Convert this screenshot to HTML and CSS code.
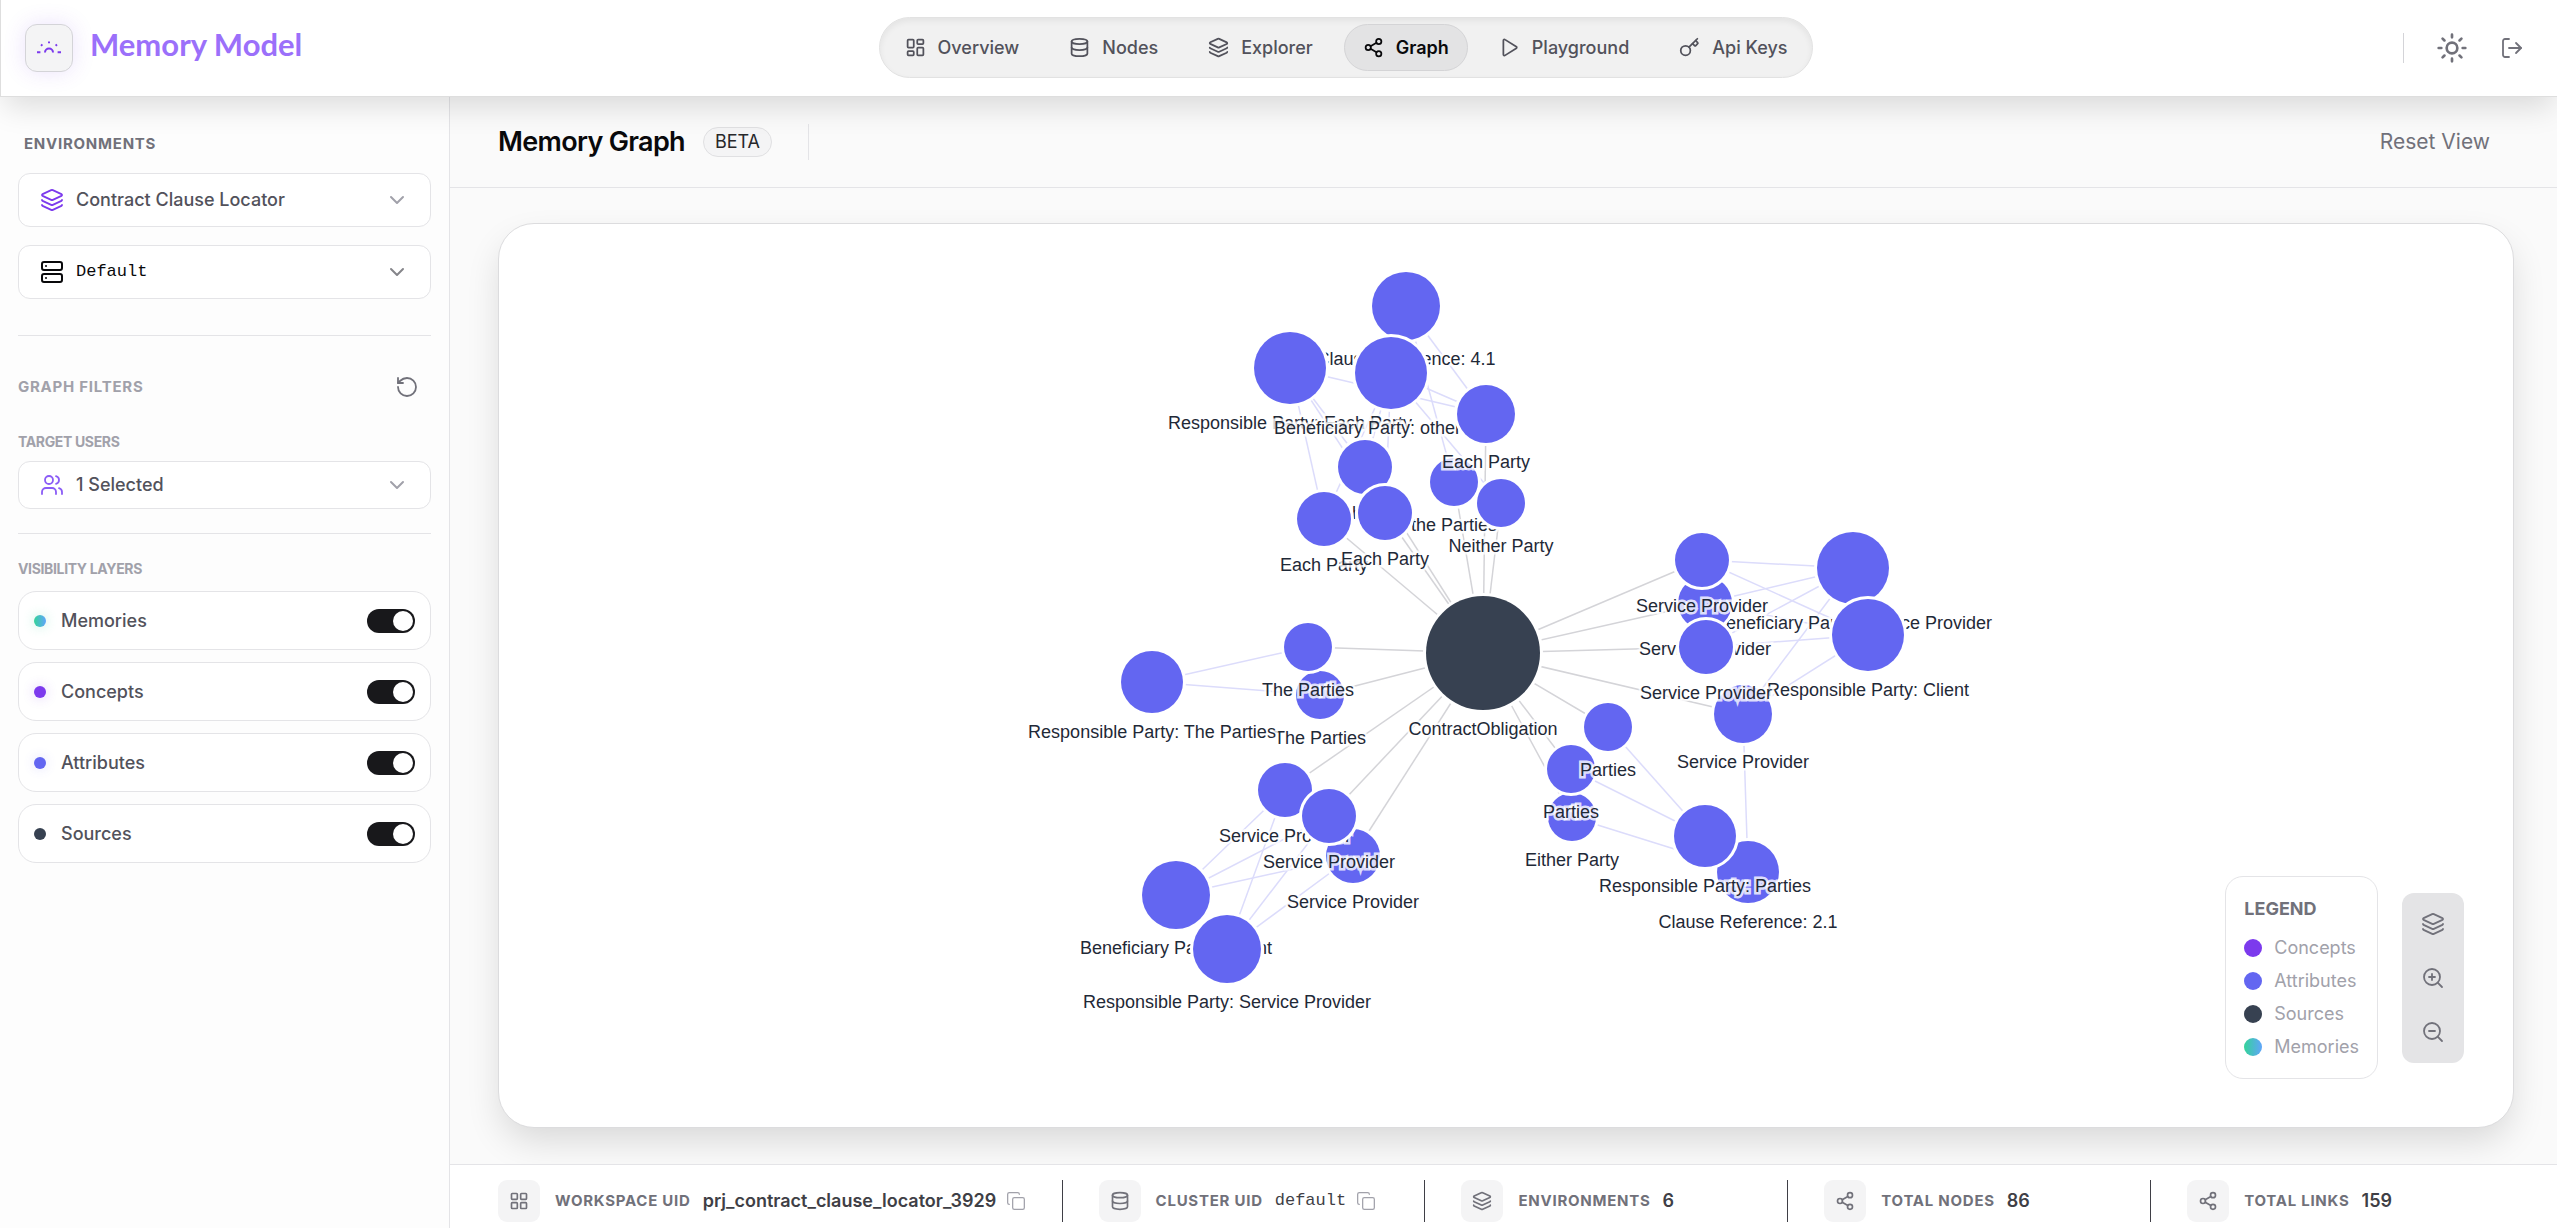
FILE: index.html
```html
<!DOCTYPE html>
<html lang="en">
<head>
    <meta charset="UTF-8">
    <meta name="viewport" content="width=device-width, initial-scale=1.0">
    <title>Memory Model - Memory Graph</title>
    <link rel="stylesheet" href="styles.css">
</head>
<body>
    <!-- Shared icons -->
    <svg class="sprite" aria-hidden="true">
        <symbol id="i-dashboard" viewBox="0 0 24 24"><rect x="3" y="3" width="7" height="9" rx="1"/><rect x="14" y="3" width="7" height="5" rx="1"/><rect x="14" y="12" width="7" height="9" rx="1"/><rect x="3" y="16" width="7" height="5" rx="1"/></symbol>
        <symbol id="i-grid" viewBox="0 0 24 24"><rect x="3" y="3" width="7" height="7" rx="1"/><rect x="14" y="3" width="7" height="7" rx="1"/><rect x="14" y="14" width="7" height="7" rx="1"/><rect x="3" y="14" width="7" height="7" rx="1"/></symbol>
        <symbol id="i-database" viewBox="0 0 24 24"><ellipse cx="12" cy="5" rx="9" ry="3"/><path d="M3 5V19A9 3 0 0 0 21 19V5"/><path d="M3 12A9 3 0 0 0 21 12"/></symbol>
        <symbol id="i-layers" viewBox="0 0 24 24"><path d="M12.83 2.18a2 2 0 0 0-1.66 0L2.6 6.08a1 1 0 0 0 0 1.83l8.58 3.91a2 2 0 0 0 1.66 0l8.58-3.9a1 1 0 0 0 0-1.83z"/><path d="M2 12a1 1 0 0 0 .58.91l8.6 3.91a2 2 0 0 0 1.65 0l8.58-3.9A1 1 0 0 0 22 12"/><path d="M2 17a1 1 0 0 0 .58.91l8.6 3.91a2 2 0 0 0 1.65 0l8.58-3.9A1 1 0 0 0 22 17"/></symbol>
        <symbol id="i-share" viewBox="0 0 24 24"><circle cx="18" cy="5" r="3"/><circle cx="6" cy="12" r="3"/><circle cx="18" cy="19" r="3"/><path d="M8.59 13.51l6.83 3.98M15.41 6.51l-6.82 3.98"/></symbol>
        <symbol id="i-play" viewBox="0 0 24 24"><path d="M5 4a1.2 1.2 0 0 1 1.9-1l13 8.2a1 1 0 0 1 0 1.6l-13 8.2A1.2 1.2 0 0 1 5 20z"/></symbol>
        <symbol id="i-key" viewBox="0 0 24 24"><path d="m15.5 7.5 2.3 2.3a1 1 0 0 0 1.4 0l2.1-2.1a1 1 0 0 0 0-1.4L19 4"/><path d="m21 2-9.6 9.6"/><circle cx="7.5" cy="15.5" r="5.5"/></symbol>
        <symbol id="i-sun" viewBox="0 0 24 24"><circle cx="12" cy="12" r="4"/><path d="M12 2v2M12 20v2M4.93 4.93l1.41 1.41M17.66 17.66l1.41 1.41M2 12h2M20 12h2M6.34 17.66l-1.41 1.41M19.07 4.93l-1.41 1.41"/></symbol>
        <symbol id="i-logout" viewBox="0 0 24 24"><path d="M9 21H5a2 2 0 0 1-2-2V5a2 2 0 0 1 2-2h4"/><path d="m16 17 5-5-5-5"/><path d="M21 12H9"/></symbol>
        <symbol id="i-server" viewBox="0 0 24 24"><rect x="2" y="2" width="20" height="8" rx="2"/><rect x="2" y="14" width="20" height="8" rx="2"/><path d="M6 6h.01M6 18h.01"/></symbol>
        <symbol id="i-users" viewBox="0 0 24 24"><path d="M16 21v-2a4 4 0 0 0-4-4H6a4 4 0 0 0-4 4v2"/><circle cx="9" cy="7" r="4"/><path d="M22 21v-2a4 4 0 0 0-3-3.87"/><path d="M16 3.13a4 4 0 0 1 0 7.75"/></symbol>
        <symbol id="i-chevron" viewBox="0 0 24 24"><path d="m6 9 6 6 6-6"/></symbol>
        <symbol id="i-rotate" viewBox="0 0 24 24"><path d="M3 12a9 9 0 1 0 9-9 9.75 9.75 0 0 0-6.74 2.74L3 8"/><path d="M3 3v5h5"/></symbol>
        <symbol id="i-copy" viewBox="0 0 24 24"><rect x="8" y="8" width="14" height="14" rx="2"/><path d="M4 16c-1.1 0-2-.9-2-2V4c0-1.1.9-2 2-2h10c1.1 0 2 .9 2 2"/></symbol>
        <symbol id="i-zoom-in" viewBox="0 0 24 24"><circle cx="11" cy="11" r="8"/><path d="m21 21-4.35-4.35M11 8v6M8 11h6"/></symbol>
        <symbol id="i-zoom-out" viewBox="0 0 24 24"><circle cx="11" cy="11" r="8"/><path d="m21 21-4.35-4.35M8 11h6"/></symbol>
    </svg>

    <header class="topbar">
        <a href="#" class="brand">
            <span class="brand-logo">
                <svg viewBox="0 0 26 26" aria-hidden="true">
                    <path d="M1 17.2h3.4M21.6 17.2H25M9 17.6a4 4 0 0 1 8 0"/>
                    <path d="M5 9.6l1.4 1.2M21 9.6l-1.4 1.2M13 6.4v1.8"/>
                </svg>
            </span>
            <span class="brand-name">Memory Model</span>
        </a>

        <nav class="nav">
            <a href="#" class="nav-item"><svg class="icon"><use href="#i-dashboard"/></svg>Overview</a>
            <a href="#" class="nav-item"><svg class="icon"><use href="#i-database"/></svg>Nodes</a>
            <a href="#" class="nav-item"><svg class="icon"><use href="#i-layers"/></svg>Explorer</a>
            <a href="#" class="nav-item active"><svg class="icon"><use href="#i-share"/></svg>Graph</a>
            <a href="#" class="nav-item"><svg class="icon"><use href="#i-play"/></svg>Playground</a>
            <a href="#" class="nav-item"><svg class="icon"><use href="#i-key"/></svg>Api Keys</a>
        </nav>

        <div class="topbar-actions">
            <span class="divider"></span>
            <button type="button" class="icon-btn" aria-label="Toggle theme"><svg class="icon icon-lg"><use href="#i-sun"/></svg></button>
            <button type="button" class="icon-btn" aria-label="Log out"><svg class="icon icon-md"><use href="#i-logout"/></svg></button>
        </div>
    </header>

    <div class="layout">
        <aside class="sidebar">
            <h2 class="side-title">Environments</h2>
            <div class="select-box">
                <svg class="icon icon-md select-icon purple"><use href="#i-layers"/></svg>
                <select aria-label="Environment"><option>Contract Clause Locator</option></select>
                <svg class="icon chevron"><use href="#i-chevron"/></svg>
            </div>
            <div class="select-box mono">
                <svg class="icon icon-md select-icon"><use href="#i-server"/></svg>
                <select aria-label="Cluster"><option>Default</option></select>
                <svg class="icon chevron"><use href="#i-chevron"/></svg>
            </div>

            <section class="filters">
                <div class="filters-head">
                    <h2>Graph Filters</h2>
                    <button type="button" class="icon-btn" aria-label="Reset filters"><svg class="icon icon-md"><use href="#i-rotate"/></svg></button>
                </div>
                <label class="side-label" for="target-users">Target Users</label>
                <div class="select-box compact">
                    <svg class="icon icon-md select-icon violet"><use href="#i-users"/></svg>
                    <select id="target-users"><option>1 Selected</option></select>
                    <svg class="icon chevron"><use href="#i-chevron"/></svg>
                </div>
            </section>

            <section class="layers">
                <h3 class="side-label">Visibility Layers</h3>
                <label class="layer"><span class="dot memories"></span>Memories<input type="checkbox" class="toggle" checked></label>
                <label class="layer"><span class="dot concepts"></span>Concepts<input type="checkbox" class="toggle" checked></label>
                <label class="layer"><span class="dot attributes"></span>Attributes<input type="checkbox" class="toggle" checked></label>
                <label class="layer"><span class="dot sources"></span>Sources<input type="checkbox" class="toggle" checked></label>
            </section>
        </aside>

        <main class="main">
            <div class="page-head">
                <h1>Memory Graph</h1>
                <span class="badge">BETA</span>
                <span class="divider"></span>
                <button type="button" class="reset-btn">Reset View</button>
            </div>

            <div class="canvas-wrap">
                <div class="canvas">
                    <svg id="graph" viewBox="0 0 2014 903" role="img" aria-label="Memory graph">
                        <g id="edges"></g>
                        <g id="nodes"></g>
                    </svg>

                    <div class="overlay">
                        <div class="legend">
                            <h3>LEGEND</h3>
                            <ul>
                                <li><span class="dot concepts"></span>Concepts</li>
                                <li><span class="dot attributes"></span>Attributes</li>
                                <li><span class="dot sources"></span>Sources</li>
                                <li><span class="dot memories"></span>Memories</li>
                            </ul>
                        </div>
                        <div class="zoom-tools">
                            <button type="button" class="icon-btn" aria-label="Layers"><svg class="icon icon-md"><use href="#i-layers"/></svg></button>
                            <button type="button" class="icon-btn" aria-label="Zoom in"><svg class="icon icon-md"><use href="#i-zoom-in"/></svg></button>
                            <button type="button" class="icon-btn" aria-label="Zoom out"><svg class="icon icon-md"><use href="#i-zoom-out"/></svg></button>
                        </div>
                    </div>
                </div>
            </div>

            <footer class="stats">
                <div class="stat">
                    <span class="stat-icon"><svg class="icon"><use href="#i-grid"/></svg></span>
                    <span class="stat-label">Workspace UID</span>
                    <span class="stat-value">prj_contract_clause_locator_3929</span>
                    <button type="button" class="copy-btn" aria-label="Copy workspace UID"><svg class="icon"><use href="#i-copy"/></svg></button>
                </div>
                <div class="stat">
                    <span class="stat-icon"><svg class="icon"><use href="#i-database"/></svg></span>
                    <span class="stat-label">Cluster UID</span>
                    <span class="stat-value mono">default</span>
                    <button type="button" class="copy-btn" aria-label="Copy cluster UID"><svg class="icon"><use href="#i-copy"/></svg></button>
                </div>
                <div class="stat">
                    <span class="stat-icon"><svg class="icon"><use href="#i-layers"/></svg></span>
                    <span class="stat-label">Environments</span>
                    <span class="stat-value">6</span>
                </div>
                <div class="stat">
                    <span class="stat-icon"><svg class="icon"><use href="#i-share"/></svg></span>
                    <span class="stat-label">Total Nodes</span>
                    <span class="stat-value">86</span>
                </div>
                <div class="stat">
                    <span class="stat-icon"><svg class="icon"><use href="#i-share"/></svg></span>
                    <span class="stat-label">Total Links</span>
                    <span class="stat-value">159</span>
                </div>
            </footer>
        </main>
    </div>

    <script src="graph.js"></script>
</body>
</html>
```
FILE: styles.css
```css
* { box-sizing: border-box; }
body { margin: 0; min-height: 100vh; display: flex; flex-direction: column; font-family: Inter, "Liberation Sans", sans-serif; font-size: 18px; line-height: 24px; color: #52525b; background: #fafafa; }
h1, h2, h3, ul { margin: 0; padding: 0; }
ul { list-style: none; }
a { color: inherit; text-decoration: none; }
button, select { font: inherit; color: inherit; border: none; background: none; padding: 0; }
button { cursor: pointer; }

.sprite { display: none; }
.icon { width: 20px; height: 20px; flex: none; fill: none; stroke: currentColor; stroke-width: 2; stroke-linecap: round; stroke-linejoin: round; }
.icon-md { width: 24px; height: 24px; stroke-width: 1.8; }
.icon-lg { width: 32px; height: 32px; stroke-width: 2; }
.icon-btn { width: 48px; height: 48px; display: flex; align-items: center; justify-content: center; color: #71717a; }
.divider { width: 1px; height: 30px; background: #d4d4d8; }
.mono { font-family: "Liberation Mono", monospace; }

/* Top bar */
.topbar { position: relative; z-index: 2; display: flex; align-items: center; justify-content: space-between; height: 97px; padding: 0 21px 1px 24px; background: #fff; border: solid #dedede; border-width: 0 0 1px 1px; box-shadow: 0 14px 28px -4px rgba(0,0,0,0.13); }
.brand { display: flex; align-items: center; gap: 17px; min-width: 278px; }
.brand-logo { display: flex; align-items: center; justify-content: center; width: 48px; height: 48px; border: 1px solid #d4d4d8; border-radius: 12px; background: #f4f4f5; box-shadow: 0 0 22px rgba(124,58,237,0.15); }
.brand-logo svg { width: 26px; height: 26px; fill: none; stroke: #7c3aed; stroke-width: 2; }
.brand-name { font-family: Lato, sans-serif; font-size: 31px; font-weight: 700; line-height: 36px; color: #9b70fa; padding-bottom: 8px; }
.nav { display: flex; gap: 12px; padding: 6px; border: 1px solid #e2e2e2; border-radius: 31px; background: #f1f1f1; box-shadow: inset 0 3px 6px rgba(0,0,0,0.06); }
.nav-item { display: flex; align-items: center; gap: 12px; height: 47px; padding: 0 18px; border: 1px solid transparent; border-radius: 24px; font-weight: 500; }
.nav-item .icon { width: 21px; height: 21px; }
.nav-item.active { background: #e3e3e4; border-color: #d4d4d6; color: #09090b; font-weight: 600; }
.topbar-actions { display: flex; align-items: center; gap: 12px; padding-left: 14px; }
.topbar-actions .divider { margin-right: 12px; }

.layout { flex: 1; display: flex; }

/* Sidebar */
.sidebar { width: 450px; flex: none; padding: 35px 18px 18px; background: #fdfdfd; border-right: 1px solid #e4e4e7; }
.sidebar h2 { font-size: 15px; font-weight: 700; letter-spacing: 0.05em; text-transform: uppercase; color: #a1a1aa; }
.sidebar .side-title { padding-left: 6px; margin-bottom: 17px; color: #71717a; }
.select-box { position: relative; margin-bottom: 18px; }
.select-box select { display: block; width: 100%; height: 54px; padding: 0 54px 0 57px; appearance: none; border: 1px solid #e4e4e7; border-radius: 12px; background: #fff; font-weight: 500; }
.select-box .select-icon { position: absolute; left: 22px; top: 50%; margin-top: -12px; }
.select-box .chevron { position: absolute; right: 22px; top: 50%; width: 24px; height: 24px; margin-top: -12px; color: #a1a1aa; pointer-events: none; }
.select-box.mono { color: #09090b; }
.select-box.mono select { font-size: 17px; font-weight: 400; }
.select-box.mono .icon { stroke-width: 2; }
.select-box.mono .chevron { color: #85858a; }
.select-box.compact { margin-bottom: 0; }
.select-box.compact select { height: 48px; }
.purple { color: #7c3aed; }
.violet { color: #8b5cf6; }
.filters { margin-top: 36px; padding-top: 27px; border-top: 1px solid #e4e4e7; }
.filters-head { display: flex; align-items: center; justify-content: space-between; }
.side-label { display: block; font-size: 14px; font-weight: 700; line-height: 20px; letter-spacing: -0.025em; text-transform: uppercase; color: #a1a1aa; }
.filters .side-label { margin: 21px 0 9px; }
.layers { margin-top: 24px; padding-top: 25px; border-top: 1px solid #e4e4e7; display: flex; flex-direction: column; gap: 12px; }
.layer { display: flex; align-items: center; gap: 15px; height: 59px; padding: 0 15px; border: 1px solid #e4e4e7; border-radius: 18px; background: #fff; font-weight: 500; }
.dot { width: 12px; height: 12px; flex: none; border-radius: 50%; }
.memories { background: linear-gradient(90deg, #34d399, #60a5fa); }
.concepts { background: #7c3aed; }
.attributes { background: #6366f1; }
.sources { background: #374151; }
.layer .dot { box-shadow: 0 0 12px rgba(99,102,241,0.2); }
.layer .memories { box-shadow: 0 0 12px rgba(52,211,153,0.3); }
.layer .concepts { box-shadow: 0 0 12px rgba(124,58,237,0.25); }
.layer .sources { box-shadow: none; }
.toggle { appearance: none; width: 48px; height: 24px; margin: 0 0 0 auto; padding: 2px; border-radius: 12px; background: #d4d4d8; cursor: pointer; }
.toggle::before { content: ""; display: block; width: 20px; height: 20px; border-radius: 50%; background: #fff; }
.toggle:checked { background: #18181b; }
.toggle:checked::before { margin-left: auto; }

/* Page */
.main { flex: 1; min-width: 0; display: flex; flex-direction: column; }
.page-head { display: flex; align-items: center; height: 91px; padding: 0 43px 1px 48px; border-bottom: 1px solid #e4e4e7; }
.page-head h1 { font-size: 27px; font-weight: 600; line-height: 36px; letter-spacing: -0.025em; color: #09090b; }
.badge { margin-left: 18px; padding: 1px 11px; border: 1px solid #e0e0e2; border-radius: 15px; background: #f4f4f5; color: #27272a; line-height: 26px; }
.page-head .divider { height: 36px; margin-left: 36px; background: #e4e4e7; }
.reset-btn { margin-left: auto; padding: 8px 24px; font-size: 21px; color: #71717a; }
.canvas-wrap { flex: 1; display: flex; padding: 35px 43px 36px 48px; overflow: hidden; }
.canvas { position: relative; flex: 1; min-width: 0; border: 1px solid #dcdcde; border-radius: 36px; background: #fff; box-shadow: 0 16px 36px -4px rgba(0,0,0,0.14); }
#graph { position: absolute; width: 100%; height: 100%; }
#graph line { stroke-width: 1.5; }
.edge-source { stroke: #d4d4d8; }
.edge-attribute { stroke: #dcdcfb; }
.node circle { fill: #6366f1; stroke: #fff; stroke-width: 6; paint-order: stroke; }
.node.source circle { fill: #374151; }
.node text { font-family: Arial, "Liberation Sans", sans-serif; font-size: 18px; fill: #1f2937; text-anchor: middle; stroke: rgba(255,255,255,0.8); stroke-width: 5; paint-order: stroke; }
.overlay { position: absolute; right: 49px; bottom: 48px; display: flex; align-items: center; gap: 24px; }
.legend { padding: 20px 18px 15px; border: 1px solid #e4e4e7; border-radius: 18px; background: #fff; color: #a1a1aa; }
.legend h3 { font-size: 18px; font-weight: 700; line-height: 24px; margin-bottom: 10px; color: #71717a; }
.legend li { display: flex; align-items: center; gap: 12px; line-height: 33px; }
.legend .dot { width: 18px; height: 18px; }
.zoom-tools { display: flex; flex-direction: column; gap: 6px; padding: 7px; border-radius: 12px; background: #e4e4e6; }

/* Footer stats */
.stats { display: grid; grid-template-columns: 19fr repeat(4, 11fr); gap: 36px; padding: 15px 43px 6px 48px; border-top: 1px solid #e4e4e7; background: #fff; }
.stat { display: flex; align-items: center; border-right: 1px solid #3f3f46; white-space: nowrap; }
.stat:last-child { border-right: none; }
.stat-icon { display: flex; align-items: center; justify-content: center; width: 42px; height: 42px; margin-right: 15px; border-radius: 9px; background: #f4f4f5; color: #71717a; }
.stat-label { margin-right: 12px; font-size: 15px; font-weight: 700; letter-spacing: 0.05em; text-transform: uppercase; color: #71717a; }
.stat-value { font-weight: 600; color: #3f3f46; }
.stat-value.mono { font-size: 17px; font-weight: 400; }
.copy-btn { display: flex; margin-left: 10px; color: #a1a1aa; }
.copy-btn .icon { stroke-width: 1.5; }
```
FILE: graph.js
```js
const SVG_NS = 'http://www.w3.org/2000/svg';

// id: [x, y, radius, label], later nodes are painted on top
const nodes = {
    clause41: [907, 82, 34, 'Clause Reference: 4.1'],
    respEach: [791, 144, 36, 'Responsible Party: Each Party'],
    benOther: [892, 149, 36, 'Beneficiary Party: other Party'],
    theParties: [955, 258, 24, 'the Parties'],
    each1: [987, 190, 29, 'Each Party'],
    neither: [1002, 279, 24, 'Neither Party'],
    each2: [866, 243, 27, 'Each Party'],
    each3: [825, 295, 27, 'Each Party'],
    each4: [886, 289, 27, 'Each Party'],
    root: [984, 429, 57, 'ContractObligation'],
    parties2: [821, 471, 24, 'The Parties'],
    respThe: [653, 458, 31, 'Responsible Party: The Parties'],
    parties1: [809, 423, 24, 'The Parties'],
    sp3: [854, 632, 27, 'Service Provider'],
    sp1: [786, 566, 27, 'Service Provider'],
    sp2: [830, 592, 27, 'Service Provider'],
    benClient: [677, 671, 34, 'Beneficiary Party: Client'],
    respSp: [728, 725, 34, 'Responsible Party: Service Provider'],
    either: [1073, 593, 24, 'Either Party'],
    parties4: [1072, 545, 24, 'Parties'],
    parties3: [1109, 503, 24, 'Parties'],
    benSp: [1354, 344, 36, 'Beneficiary Party: Service Provider'],
    sp5: [1206, 379, 27, 'Service Provider'],
    sp4: [1203, 336, 27, 'Service Provider'],
    respClient: [1369, 411, 36, 'Responsible Party: Client'],
    sp7: [1244, 490, 29, 'Service Provider'],
    sp6: [1207, 423, 27, 'Service Provider'],
    clause21: [1249, 648, 31, 'Clause Reference: 2.1'],
    respParties: [1206, 612, 31, 'Responsible Party: Parties']
};

const sourceLinks = ['theParties', 'each1', 'neither', 'each2', 'each3', 'each4', 'parties1', 'parties2', 'sp1', 'sp2', 'sp3',
    'sp4', 'sp5', 'sp6', 'sp7', 'parties3', 'parties4', 'either'];

const attributeLinks = {
    clause41: ['each1', 'theParties'],
    respEach: ['each1', 'each2', 'each3', 'each4'],
    benOther: ['each1', 'each2', 'each3', 'each4', 'neither'],
    respThe: ['parties1', 'parties2'],
    benClient: ['sp1', 'sp2', 'sp3'],
    respSp: ['sp1', 'sp2', 'sp3'],
    benSp: ['sp4', 'sp5', 'sp6', 'sp7'],
    respClient: ['sp4', 'sp5', 'sp6', 'sp7'],
    clause21: ['sp7', 'either'],
    respParties: ['parties3', 'parties4']
};

function add(parent, tag, attrs) {
    const el = document.createElementNS(SVG_NS, tag);
    for (const key in attrs) el.setAttribute(key, attrs[key]);
    parent.appendChild(el);
    return el;
}

function drawEdge(from, to, cls) {
    const [x1, y1] = nodes[from];
    const [x2, y2] = nodes[to];
    add(document.getElementById('edges'), 'line', { x1, y1, x2, y2, class: cls });
}

sourceLinks.forEach(id => drawEdge('root', id, 'edge-source'));
for (const id in attributeLinks) {
    attributeLinks[id].forEach(target => drawEdge(id, target, 'edge-attribute'));
}

for (const id in nodes) {
    const [x, y, r, label] = nodes[id];
    const g = add(document.getElementById('nodes'), 'g', { class: id === 'root' ? 'node source' : 'node' });
    add(g, 'circle', { cx: x, cy: y, r });
    add(g, 'text', { x, y: y + r + 25 }).textContent = label;
}
```
